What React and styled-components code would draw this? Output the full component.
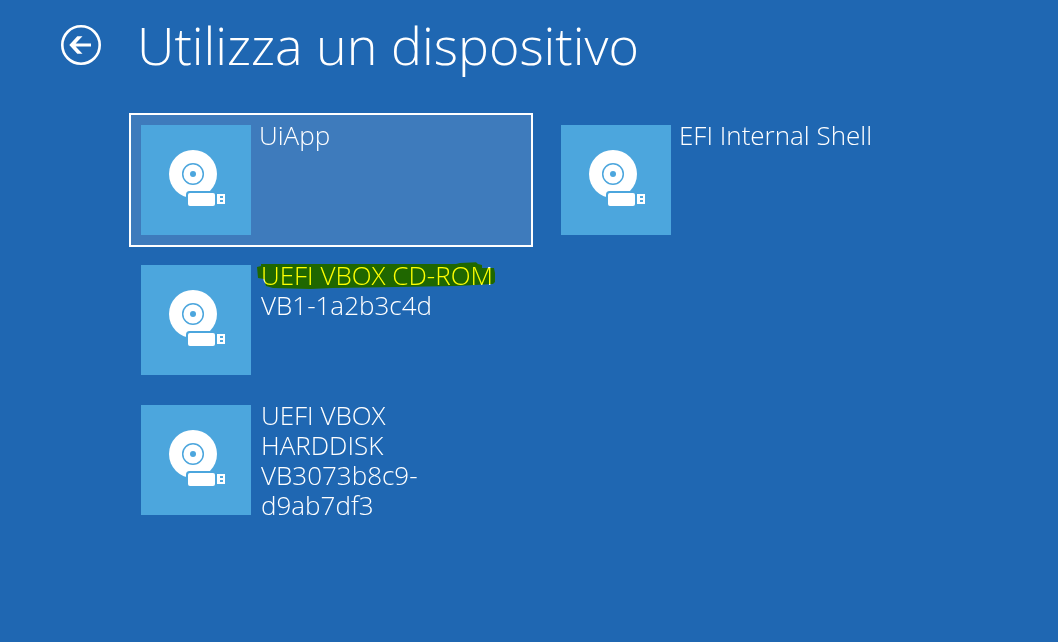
import React from "react";
import styled, { createGlobalStyle } from "styled-components";

const GlobalStyle = createGlobalStyle`
  * {
    box-sizing: border-box;
  }
  body {
    margin: 0;
    background: #1f67b2;
    color: #fff;
    font-family: "Open Sans", "Noto Sans", sans-serif;
    font-weight: 300;
  }
`;

const Page = styled.main`
  min-height: 100vh;
  padding: 7px 16px 16px 61px;
`;

const Header = styled.header`
  display: flex;
  align-items: center;
  gap: 36px;
  height: 76px;
`;

const BackButton = styled.button`
  display: flex;
  width: 40px;
  height: 40px;
  padding: 0;
  border: 0;
  background: none;
  color: inherit;
  cursor: pointer;
`;

const Title = styled.h1`
  margin: 0;
  font-size: 52px;
  line-height: 76px;
  font-weight: 300;
  white-space: nowrap;
`;

const DeviceGrid = styled.div`
  display: grid;
  grid-auto-flow: column;
  grid-template-rows: repeat(3, auto);
  grid-auto-columns: minmax(0, 404px);
  gap: 6px 16px;
  padding: 30px 0 0 68px;
`;

const DeviceTile = styled.button`
  display: flex;
  align-items: flex-start;
  gap: ${(p) => (p.$detailed ? "10px" : "8px")};
  min-height: 134px;
  padding: 10px;
  border: 2px solid ${(p) => (p.$selected ? "#fff" : "transparent")};
  background: ${(p) => (p.$selected ? "#3e7bbc" : "transparent")};
  color: inherit;
  font: inherit;
  text-align: left;
  cursor: pointer;
`;

const IconBox = styled.span`
  display: flex;
  flex: none;
  width: 110px;
  height: 110px;
  background: #4ca6dd;
`;

const Label = styled.span`
  display: flex;
  flex-direction: column;
  height: 110px;
  margin-top: -5px;
  font-size: 26px;
  line-height: 30px;
  white-space: nowrap;
`;

const Line = styled.span`
  position: relative;
`;

const Marker = styled.svg`
  position: absolute;
  left: -4px;
  top: 0;
  mix-blend-mode: multiply;
  pointer-events: none;
`;

function BackIcon() {
  return (
    <svg width="40" height="40" viewBox="0 0 40 40" aria-hidden="true">
      <circle cx="20" cy="20" r="18.7" fill="none" stroke="currentColor" strokeWidth="2.6" />
      <path
        d="M8.3 20 16.3 11.3H21.5L14.6 18.5H30V21.5H14.6L21.5 28.7H16.3Z"
        fill="currentColor"
      />
    </svg>
  );
}

function DiscUsbIcon() {
  return (
    <svg width="110" height="110" viewBox="0 0 110 110" aria-hidden="true">
      <circle cx="52" cy="49" r="24" fill="#fff" />
      <circle cx="52" cy="49" r="10.3" fill="none" stroke="#4ca6dd" strokeWidth="1.5" />
      <circle cx="52" cy="49" r="3" fill="#4ca6dd" />
      <rect x="45" y="66" width="31" height="17" rx="3.5" fill="#4ca6dd" />
      <rect x="47" y="68" width="27" height="13" rx="2" fill="#fff" />
      <path d="M76 69h8v10h-8zM79 71v2h3v-2zM79 75v2h3v-2z" fill="#fff" fillRule="evenodd" />
    </svg>
  );
}

function MarkerStroke() {
  return (
    <Marker width="240" height="30" viewBox="0 0 240 30" aria-hidden="true">
      <path
        d="M0 7 4 6V4L60 4 199 4 203 3 219 2.3 221 4 225 5V8L237 8 238 13V22L236 24 200 26 140 27 76 28 53 29 16 28 9 26 7 19 1 18Z"
        fill="#ff0"
      />
    </Marker>
  );
}

const devices = [
  { id: "uiapp", lines: ["UiApp"], selected: true },
  { id: "cdrom", lines: ["UEFI VBOX CD-ROM", "VB1-1a2b3c4d"], marked: true },
  { id: "harddisk", lines: ["UEFI VBOX", "HARDDISK", "VB3073b8c9-", "d9ab7df3"] },
  { id: "shell", lines: ["EFI Internal Shell"] },
];

function Device({ lines, selected, marked }) {
  return (
    <DeviceTile type="button" $selected={selected} $detailed={lines.length > 1}>
      <IconBox>
        <DiscUsbIcon />
      </IconBox>
      <Label>
        {lines.map((line, i) => (
          <Line key={line}>
            {line}
            {marked && i === 0 && <MarkerStroke />}
          </Line>
        ))}
      </Label>
    </DeviceTile>
  );
}

export default function App() {
  return (
    <Page>
      <GlobalStyle />
      <Header>
        <BackButton type="button" aria-label="Indietro">
          <BackIcon />
        </BackButton>
        <Title>Utilizza un dispositivo</Title>
      </Header>
      <DeviceGrid>
        {devices.map(({ id, ...device }) => (
          <Device key={id} {...device} />
        ))}
      </DeviceGrid>
    </Page>
  );
}
